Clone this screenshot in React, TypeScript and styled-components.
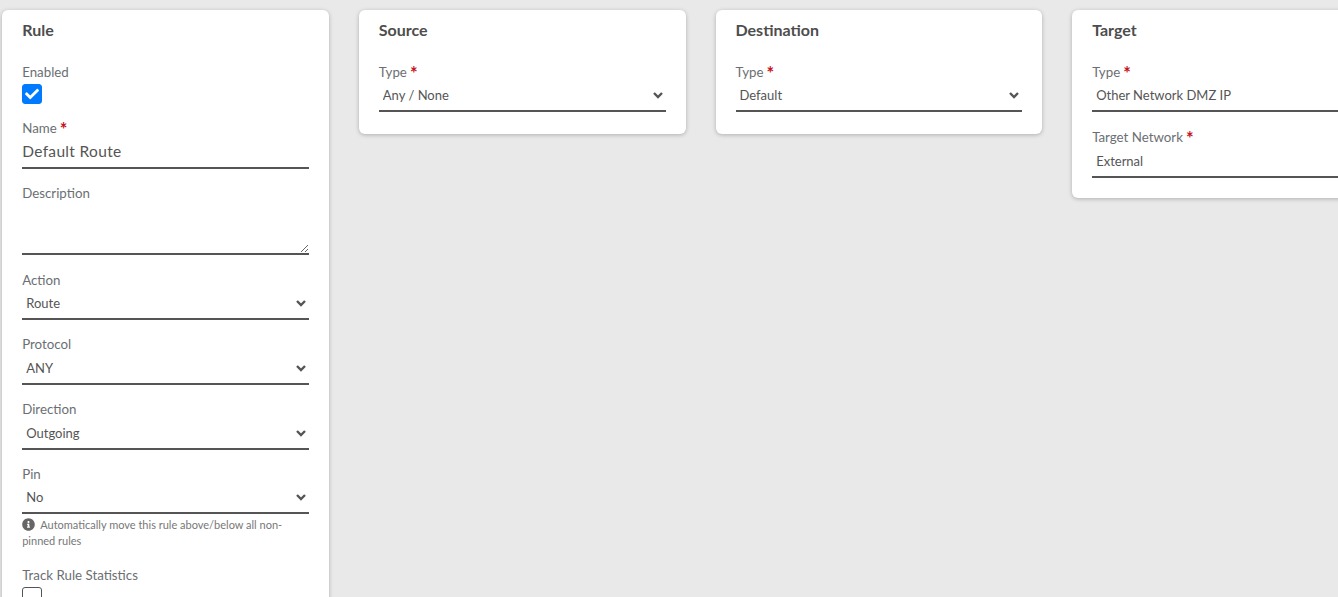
import React from "react";
import styled, { createGlobalStyle } from "styled-components";
import { FaInfoCircle, FaCheck } from "react-icons/fa";

const Global = createGlobalStyle`
  html, body { margin: 0; padding: 0; height: 597px; overflow: hidden; background: #e9e9e9; }
  body { font-family: "Lato", "Open Sans", sans-serif; color: #555; }
  * { box-sizing: border-box; }
`;

const Page = styled.main`
  display: flex;
  align-items: flex-start;
  gap: 30px;
  width: 1500px;
  padding: 10px 0 0 2.2px;
`;

const Card = styled.section<{ $bottom?: number }>`
  flex: 0 0 326.67px;
  background: #fff;
  border-radius: 6px;
  box-shadow: 0 1px 4px rgba(0, 0, 0, 0.25);
  padding: 10px 20px ${(p) => p.$bottom ?? 22}px 20px;
`;

const Title = styled.h2`
  margin: 0 0 22.5px;
  font-size: 16px;
  line-height: 20px;
  font-weight: 700;
  color: #4d4d4d;
`;

const Field = styled.div<{ $gap?: number }>`
  margin-bottom: ${(p) => p.$gap ?? 15}px;
  &:last-child { margin-bottom: 0; }
`;

const CheckField = styled.div`
  margin-bottom: 15px;
`;

const Label = styled.label`
  display: block;
  font-size: 13.3px;
  line-height: 18.67px;
  color: #6b6f73;
`;

const Star = styled.span`
  color: #c4111b;
  font-weight: 700;
  font-size: 18px;
  line-height: 0;
  vertical-align: -3px;
  margin-left: 3px;
`;

const Box = styled.span<{ $checked?: boolean }>`
  display: flex;
  align-items: center;
  justify-content: center;
  width: 20px;
  height: 20px;
  margin-top: 2.5px;
  border-radius: 3px;
  color: #fff;
  background: ${(p) => (p.$checked ? "#007bff" : "#fff")};
  border: 1px solid ${(p) => (p.$checked ? "#007bff" : "#555")};
`;

const TextInput = styled.input`
  display: block;
  width: 100%;
  height: 31.5px;
  border: 0;
  border-bottom: 2px solid #555;
  outline: 0;
  padding: 0 0 2px;
  font: 15.5px/24px "Lato", sans-serif;
  letter-spacing: 0.33px;
  color: #555;
  background: transparent;
`;

const Area = styled.textarea`
  display: block;
  width: 100%;
  height: 52px;
  border: 0;
  border-bottom: 2px solid #555;
  outline: 0;
  padding: 0;
  resize: vertical;
  background: transparent;
`;

const SelectWrap = styled.div`
  position: relative;
`;

const Select = styled.select<{ $tall?: boolean }>`
  display: block;
  width: 100%;
  height: ${(p) => (p.$tall ? 31.66 : 31)}px;
  appearance: none;
  border: 0;
  border-bottom: 2px solid #555;
  border-radius: 0;
  outline: 0;
  padding: 0 0 1px 4px;
  font: 13px "Lato", sans-serif;
  color: #555;
  background: transparent;
`;

const Chevron = styled.svg`
  position: absolute;
  right: 3px;
  top: 11px;
  width: 10px;
  height: 7px;
  pointer-events: none;
  fill: none;
  stroke: #555;
  stroke-width: 2.4;
`;

const Help = styled.p`
  margin: 3px 0 0;
  font-size: 11px;
  line-height: 16px;
  color: #777;
  svg { vertical-align: -2px; margin-right: 5px; color: #666; }
`;

const fields = [
  { label: "Action", value: "Route" },
  { label: "Protocol", value: "ANY" },
  { label: "Direction", value: "Outgoing" },
];

const Dropdown = ({
  label,
  value,
  required,
  tall,
}: {
  label: string;
  value: string;
  required?: boolean;
  tall?: boolean;
}) => (
  <>
    <Label>
      {label}
      {required && <Star>*</Star>}
    </Label>
    <SelectWrap>
      <Select defaultValue={value} aria-label={label} $tall={tall}>
        <option>{value}</option>
      </Select>
      <Chevron viewBox="0 0 10 7">
        <path d="M1 1l4 4 4-4" />
      </Chevron>
    </SelectWrap>
  </>
);

export default function App() {
  return (
    <Page>
      <Global />
      <Card>
        <Title>Rule</Title>
        <CheckField>
          <Label>Enabled</Label>
          <Box $checked>
            <FaCheck size={14} />
          </Box>
        </CheckField>
        <Field>
          <Label>
            Name<Star>*</Star>
          </Label>
          <TextInput defaultValue="Default Route" />
        </Field>
        <Field $gap={16.1}>
          <Label>Description</Label>
          <Area />
        </Field>
        {fields.map((f) => (
          <Field key={f.label}>
            <Dropdown label={f.label} value={f.value} />
          </Field>
        ))}
        <Field $gap={17}>
          <Dropdown label="Pin" value="No" />
          <Help>
            <FaInfoCircle size={13} />
            Automatically move this rule above/below all non-pinned rules
          </Help>
        </Field>
        <CheckField>
          <Label>Track Rule Statistics</Label>
          <Box />
        </CheckField>
      </Card>
      <Card>
        <Title>Source</Title>
        <Field>
          <Dropdown label="Type" value="Any / None" required />
        </Field>
      </Card>
      <Card>
        <Title>Destination</Title>
        <Field>
          <Dropdown label="Type" value="Default" required />
        </Field>
      </Card>
      <Card $bottom={19.7}>
        <Title>Target</Title>
        <Field $gap={15.5}>
          <Dropdown label="Type" value="Other Network DMZ IP" required />
        </Field>
        <Field>
          <Dropdown label="Target Network" value="External" required tall />
        </Field>
      </Card>
    </Page>
  );
}
